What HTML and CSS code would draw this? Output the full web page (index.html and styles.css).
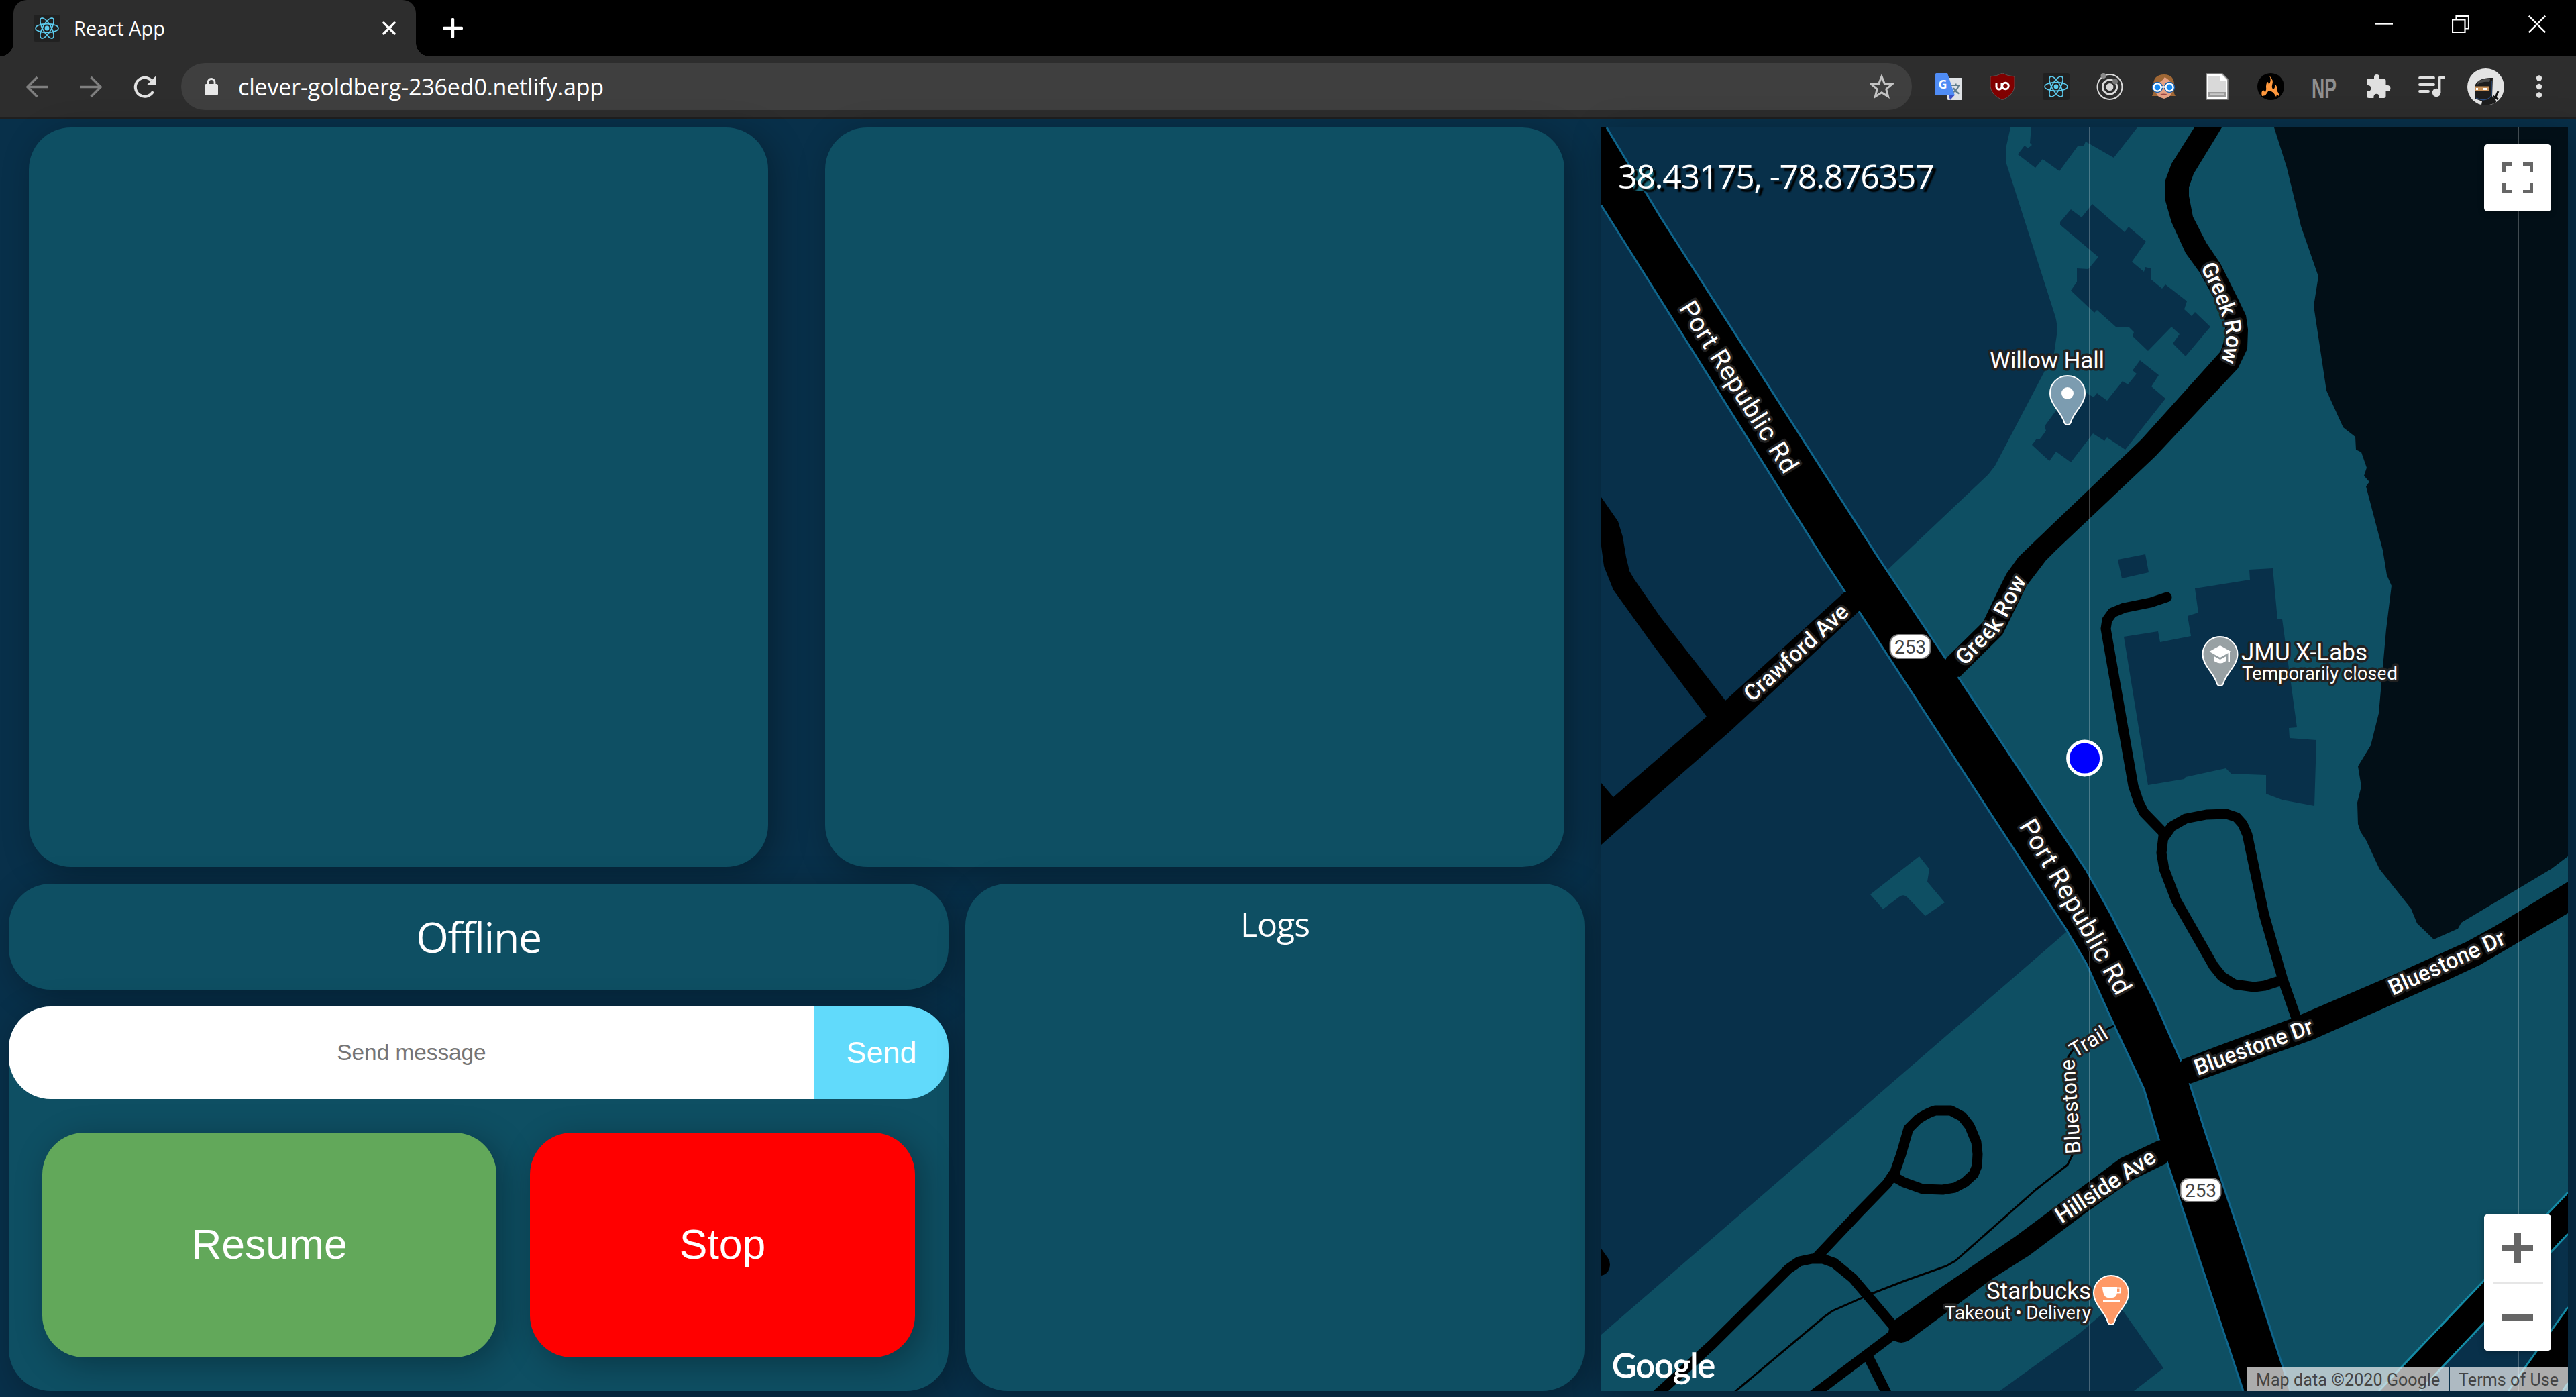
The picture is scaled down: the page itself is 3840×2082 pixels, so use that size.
FILE: index.html
```html
<!DOCTYPE html>
<html lang="en">
<head>
<meta charset="utf-8">
<title>React App</title>
<link rel="stylesheet" href="styles.css">
</head>
<body>
<svg class="defs" width="0" height="0" aria-hidden="true">
  <symbol id="react" viewBox="0 0 40 40">
    <rect width="40" height="40" rx="3" fill="#212121"/>
    <g fill="none" stroke="#5ccbee" stroke-width="1.7">
      <ellipse cx="20" cy="20" rx="17" ry="6.3"/>
      <ellipse cx="20" cy="20" rx="17" ry="6.3" transform="rotate(60 20 20)"/>
      <ellipse cx="20" cy="20" rx="17" ry="6.3" transform="rotate(120 20 20)"/>
    </g>
    <circle cx="20" cy="20" r="3.4" fill="#5ccbee"/>
  </symbol>
</svg>
<div class="browser">
  <header class="tabstrip">
    <div class="tab">
      <svg class="favicon"><use href="#react"/></svg>
      <span class="tab-title">React App</span>
      <svg class="tab-close" viewBox="0 0 20 20"><path d="M2 2L18 18M18 2L2 18" stroke="#fff" stroke-width="3.4" stroke-linecap="round"/></svg>
    </div>
    <svg class="new-tab" viewBox="0 0 30 30"><path d="M15 2V28M2 15H28" stroke="#fff" stroke-width="4.4" stroke-linecap="round"/></svg>
    <div class="window-controls">
      <svg viewBox="0 0 26 26"><path d="M0 12.5H26" stroke="#fff" stroke-width="2.4"/></svg>
      <svg viewBox="0 0 26 26"><path d="M1 6.5H19.5V25H1ZM6.5 6V1H25V19.5H20" fill="none" stroke="#fff" stroke-width="2.2"/></svg>
      <svg viewBox="0 0 26 26"><path d="M.8 .8L25.2 25.2M25.2 .8L.8 25.2" stroke="#fff" stroke-width="2.3"/></svg>
    </div>
  </header>
  <nav class="toolbar">
    <svg class="nav-icon" viewBox="0 0 36 36"><path d="M34 18H4M18 3L3 18L18 33" fill="none" stroke="#7f7f7f" stroke-width="3.6"/></svg>
    <svg class="nav-icon" viewBox="0 0 36 36"><path d="M2 18H32M18 3L33 18L18 33" fill="none" stroke="#7f7f7f" stroke-width="3.6"/></svg>
    <svg class="nav-icon" viewBox="0 0 36 36"><path d="M31 25A14.4 14.4 0 1 1 28.5 8" fill="none" stroke="#e2e2e2" stroke-width="4.2"/><path d="M35.500 1V15.500H21Z" fill="#e2e2e2"/></svg>
    <div class="omnibox">
      <svg class="lock" viewBox="0 0 22 28"><path d="M6 12V7.500a5 5 0 0 1 10 0V12" fill="none" stroke="#e8e8e8" stroke-width="2.8"/><rect x="1" y="10" width="20" height="17" rx="2.500" fill="#e8e8e8"/></svg>
      <span class="url">clever-goldberg-236ed0.netlify.app</span>
      <svg class="star" viewBox="0 0 36 36"><path d="M18 3L22.200 13.600L33.500 14.400L24.800 21.700L27.600 32.800L18 26.700L8.400 32.800L11.200 21.700L2.500 14.400L13.800 13.600Z" fill="none" stroke="#c4c4c4" stroke-width="3"/></svg>
    </div>
    <div class="extensions">
      <svg viewBox="0 0 40 40"><rect x="18" y="7" width="22" height="33" rx="1.500" fill="#dfe2e5"/><path d="M24 18H37M30.500 15.500V18M35 18Q33 25 25.500 29M27 22Q30 27.500 35.500 30.500" fill="none" stroke="#607d8b" stroke-width="2.200"/><path d="M22 40L28.500 33H20Z" fill="#3b50c4"/><path d="M1.500 0H18L29 33H1.500Q0 33 0 31.500V1.500Q0 0 1.500 0Z" fill="#4f8cf5"/><text x="4.500" y="22.500" class="g-mark">G</text></svg>
      <svg viewBox="0 0 40 40"><path d="M20 0Q28 4.500 38 5V20Q37 32 20 40Q3 32 2 20V5Q12 4.500 20 0Z" fill="#800000" stroke="#5d5454" stroke-width="1"/><path d="M11 14V20a4 4 0 0 0 8 0V14" fill="none" stroke="#fff" stroke-width="3"/><circle cx="24.500" cy="19" r="4.700" fill="none" stroke="#fff" stroke-width="3"/></svg>
      <svg viewBox="0 0 40 40"><use href="#react"/></svg>
      <svg viewBox="0 0 40 40"><g fill="none" stroke="#dcdcdc" stroke-width="2"><circle cx="20" cy="20.500" r="18.500"/><circle cx="20" cy="20.500" r="10.700" stroke-width="2.800"/></g><circle cx="20" cy="20.500" r="5.500" fill="#d6d6d6"/><circle cx="10.500" cy="4" r="4" fill="#8b8b8b"/><circle cx="28" cy="12.500" r="4" fill="#777"/></svg>
      <svg viewBox="0 0 40 40"><path d="M3 34Q7 28 5 20Q4 2 21 2Q37 2 36 20Q34 28 38 34Z" fill="#9f6735"/><path d="M7 16Q17 14 22 6Q29 10 34 17V24Q32 36 21 38Q9 36 7 24Z" fill="#e5a183"/><path d="M15 31Q20 30 26 31Q21 34 15 31Z" fill="#9c4848"/><g fill="none" stroke="#155fae" stroke-width="2"><circle cx="11" cy="21" r="7.300"/><circle cx="29" cy="21" r="7.300"/></g><g fill="#1688f0" stroke="#fff" stroke-width="2.400"><circle cx="11" cy="21" r="5.600"/><circle cx="29" cy="21" r="5.600"/><path d="M17 20.500H23"/></g></svg>
      <svg viewBox="0 0 40 40"><path d="M4 1H28L36 9V39H4Z" fill="#d9d9d9" stroke="#858585" stroke-width="1.600"/><path d="M6 3H26L34 11V37H6Z" fill="none" stroke="#fff" stroke-width="2"/><path d="M25 2V11.500H35Z" fill="#fff"/><path d="M7 28H33V36H7Z" fill="#9a9a9a"/><path d="M9 31.500H31" stroke="#c9c9c9" stroke-width="2.500"/></svg>
      <svg viewBox="0 0 40 40"><circle cx="20" cy="20" r="20" fill="#000"/><path d="M12 33L7 34Q5 27 9 25Q10 28 12 28Q14 24 13 20Q13 14 16 13Q17 16 17 17Q22 11 18 4Q25 10 22 18Q21 22 24 24Q27 22 26 16Q31 20 29 26Q32 29 33 35L29 31Q29 33 28 35L24 29L19 26L16 27Z" fill="#ff983d"/></svg>
      <svg class="np" viewBox="0 0 40 40"><text x="1" y="36.500" class="np-mark" textLength="37" lengthAdjust="spacingAndGlyphs">NP</text></svg>
      <svg viewBox="0 0 40 40"><path d="M7 8H14V6a4 4 0 0 1 8 0V8H28a3.500 3.500 0 0 1 3.500 3.500V18H34a4.500 4.500 0 0 1 0 9H31.500V34A3 3 0 0 1 28.500 37H22V35a4.300 4.300 0 0 0-8.600 0V37H6.500A3.500 3.500 0 0 1 3 33.500V27H5a4.500 4.500 0 0 0 0-9H3V11.500A3.500 3.500 0 0 1 7 8Z" fill="#e0e0e0"/></svg>
      <svg viewBox="0 0 40 40"><path d="M2 7H23M2 17H23M2 27H15" stroke="#e0e0e0" stroke-width="3.800" stroke-linecap="round"/><circle cx="27" cy="29" r="6.200" fill="#e0e0e0"/><path d="M31.500 29V7H38.500" fill="none" stroke="#e0e0e0" stroke-width="3.800" stroke-linecap="round" stroke-linejoin="round"/></svg>
    </div>
    <svg class="avatar" viewBox="0 0 55 55"><circle cx="27.500" cy="27.500" r="27.500" fill="#e3e3e3"/><path d="M12 24Q18 13 38 14L37 42Q43 45 43 50Q34 56 21 54L22 49L12 45Z" fill="#1d1d1d"/><path d="M16 19Q24 15 34 16L33 20Q22 19 15 24Z" fill="#4b4b4b"/><path d="M13 44Q29 51 36 40V18" fill="none" stroke="#2b4f84" stroke-width="1.300"/><rect x="12" y="26.500" width="21" height="7.500" fill="#c69058"/><path d="M13 30.500H16M24 30.500H30" stroke="#fff" stroke-width="3.200"/><path d="M46 34L41 45M38 41L46 46" stroke="#111" stroke-width="3"/></svg>
    <svg class="menu-dots" viewBox="0 0 10 36"><g fill="#e0e0e0"><circle cx="5" cy="5.500" r="4.200"/><circle cx="5" cy="18" r="4.200"/><circle cx="5" cy="30.500" r="4.200"/></g></svg>
  </nav>

  <main class="dashboard">
    <section class="station">
      <div class="cameras">
        <div class="panel camera"></div>
        <div class="panel camera"></div>
      </div>
      <div class="lower">
        <div class="console">
          <div class="panel status">Offline</div>
          <div class="panel controls">
            <form class="message">
              <input class="message-input" type="text" placeholder="Send message">
              <button class="message-send" type="button">Send</button>
            </form>
            <div class="actions">
              <button class="action resume" type="button">Resume</button>
              <button class="action stop" type="button">Stop</button>
            </div>
          </div>
        </div>
        <div class="panel logs">Logs</div>
      </div>
    </section>

    <section class="map">
      <svg class="map-canvas" viewBox="2387 190 1441 1883">
        <defs>
          <path id="port1" d="M2502 459L2664 715"/>
          <path id="port2" d="M3009 1231Q3080 1348 3160 1494"/>
          <path id="greek1" d="M3280 398L3299 435L3312 470Q3319 486 3319 506L3309 550"/>
          <path id="greek2" d="M2929 993L2982 938L3028 852"/>
          <path id="trail" d="M3101.500 1719L3092 1574"/>
          <path id="pin" d="M0-26A26 26 0 0 1 26 0C26 17 9 28 5 43Q4 47 0 47Q-4 47-5 43C-9 28-26 17-26 0A26 26 0 0 1 0-26Z"/>
        </defs>

        <rect x="2387" y="190" width="1441" height="1883" class="land"/>
        <path class="campus" d="M2997 190L2991 217V244L3062 466Q3068 482 3066 499L3062 526L2974 694L2964 707L2814 849L2790 860L3095 1376L3080 1389L2387 1989V2073H3828V190Z"/>
        <path class="campus" d="M2861 1276L2876 1295L2873 1314L2899 1345L2870 1365L2843 1337Q2838 1332 2832 1336L2807 1355L2788 1333Z"/>
        <path class="water" d="M3390 190L3409 250L3430 337L3456 412L3449 456L3468 582L3493 637L3511 651L3512 670L3520 674L3528 697L3524 709L3532 718L3527 725L3552 820L3558 857L3565 873L3557 938L3546 1063L3534 1111L3515 1142L3520 1172L3514 1196L3515 1228L3519 1240L3527 1252L3547 1295L3594 1354L3603 1376L3628 1400L3664 1384L3669 1375L3803 1295L3828 1276V190Z"/>

        <g class="building">
          <path d="M3028 190L3026 213L3029 216L3023 221L3018 217L3008 230L3034 250L3045 237L3070 255L3097 218H3106L3109 211L3123 219L3151 235L3186 190Z"/>
          <path d="M3071 331L3087 312L3103 324L3119 304L3167 346L3173 338L3199 360L3178 390L3196 405L3198 398L3206 400V416L3223 430L3228 424L3260 449L3256 461L3267 471L3272 465L3295 487L3258 531L3239 512L3249 498L3237 487L3202 523L3179 501L3181 495L3173 487H3154L3126 462L3122 466L3087 433L3096 420V400L3113 401L3128 383L3071 335Z"/>
          <path d="M3190 537L3218 559L3207 576L3228 594L3168 670L3141 652L3137 657L3120 646L3087 689L3065 673L3055 687L3029 663L3036 654H3041L3050 642L3048 635L3064 613L3109 585L3121 592L3126 586L3141 597L3164 568L3172 573L3185 557L3179 552Z"/>
          <path d="M3157 834L3198 826L3203 853L3163 862Z"/>
          <path d="M3166 949L3217 941L3220 957L3266 948L3261 918L3277 913L3272 877L3354 864L3353 849L3388 847L3395 923H3402L3424 1084L3412 1085L3413 1100L3453 1103L3450 1201L3402 1192L3378 1183V1155L3326 1153L3318 1145L3258 1158L3256 1161L3202 1170Z"/>
          <path d="M2981 2073L3100 1987L3155 1940L3225 2039L3181 2073Z"/>
          <path d="M3828 1839L3607 2073H3739L3828 1948Z"/>
        </g>

        <g class="road-fill">
          <path d="M3828 1777L3546 2073H3607L3828 1839Z"/>
          <path d="M3828 1948L3739 2073H3820L3828 2061Z"/>
        </g>
        <path class="edge-bright" d="M3828 1777L3546 2073M3828 1839L3607 2073M3828 1948L3739 2073M3828 2061L3820 2073"/>

        <path class="road-fill" d="M2387 190H2395L2475 323L2800 831L2902 984L2919 1009L3110 1297L3147 1363L3196 1460L3213 1494L3252 1583L3264 1614L3289 1692L3336 1831L3402 2034L3414 2073H3344L3260 1821L3229 1728L3219 1701L3196 1623L3152 1529L3110 1436L3080 1385L2771 911L2751 883L2716 830L2387 306Z"/>
        <path class="edge" d="M2395 190L2475 323L2800 831L2902 984M2919 1009L3110 1297L3147 1363L3196 1460L3213 1494L3252 1583M3264 1614L3289 1692L3336 1831L3402 2034L3414 2073M3344 2073L3260 1821L3229 1728M3219 1701L3196 1623L3152 1529L3110 1436L3080 1385L2771 911M2751 883L2716 830L2387 306"/>

        <g class="road-fill">
          <path d="M3271 190L3237 244L3227 271V296L3237 331L3258 377L3279 406L3303 449L3317 478V503L3310 524L3192 655L3036 804L3009 830L2991 855L2978 881L2956 927L2902 980L2890 1000L2921 1009L2985 946L3021 873L3050 835L3065 820L3213 680L3336 549L3350 520L3351 491L3348 470L3336 445L3310 393L3289 362L3269 323L3263 292V279L3270 259L3312 190Z"/>
          <path d="M2750 882L2572 1044L2474 918L2436 863L2429 851L2424 830L2419 800L2412 777L2387 741V814L2391 844L2405 879L2461 957L2544 1068L2405 1188L2387 1167V1259L2475 1181L2580 1089L2771 911L2790 890Z"/>
          <path d="M3253 1579L3303 1560L3416 1518L3574 1450L3676 1404L3718 1381L3828 1314V1361L3697 1438L3650 1460L3449 1549L3265 1615L3240 1600Z"/>
          <path d="M3219 1699L3161 1726L3110 1764L3004 1843L2887 1923L2825 1967Q2812 1980 2816 1992Q2830 2006 2845 1998L2971 1905L3025 1871L3110 1807L3180 1758L3229 1734L3240 1715Z"/>
          <path d="M2387 1861L2397 1875Q2403 1885 2397 1895Q2393 1900 2387 1901Z"/>
        </g>
        <g class="lane">
          <path d="M2706 1876L2773 1805L2813 1764L2825 1746L2834 1720L2845 1682L2859 1668Q2874 1658 2885 1655H2908L2925 1664L2936 1678L2946 1702L2948 1720L2947 1738L2942 1750L2929 1762L2914 1770L2896 1773L2866 1772L2838 1762L2822 1753"/>
          <path d="M2467 2081L2552 2004L2666 1891L2682 1880L2701 1876H2717L2734 1882L2762 1905L2824 1978"/>
          <path d="M2825 1987L2700 2081M2783 2018L2814 2080"/>
        </g>
        <path class="lane lane-cap" d="M3230 890L3206 898L3166 906L3149 913L3141 924L3139 937L3180 1171L3188 1195L3196 1211L3227 1243"/>
        <path class="lane" d="M3223 1252L3237 1232L3258 1220L3289 1214L3319 1213L3334 1218L3343 1228L3350 1244L3375 1363L3403 1460L3424 1520M3225 1246L3222 1271L3226 1295L3244 1342L3300 1440L3312 1455L3331 1467L3360 1471L3376 1469L3404 1460"/>
        <path class="trail" d="M2584 2076L2720 1962L2731 1954L2790 1928L2839 1909L2901 1887L2915 1879L3036 1772L3082 1736L3089 1722L3083 1575L3097 1555L3151 1529"/>

        <path class="tile-line" d="M2474.500 190V2073M3114.500 190V2073M3754.500 190V2073"/>
        <rect x="2434" y="252" width="33" height="32" fill="#1a6a7c"/>

        <g class="road-label">
          <text font-size="38.500"><textPath href="#port1" textLength="295">Port Republic Rd</textPath></text>
          <text font-size="38.500"><textPath href="#port2" textLength="294">Port Republic Rd</textPath></text>
          <text class="strong"><textPath href="#greek1" textLength="150">Greek Row</textPath></text>
          <text class="strong"><textPath href="#greek2" textLength="159">Greek Row</textPath></text>
          <text class="strong" transform="translate(2612 1047) rotate(-42.200)" textLength="197">Crawford Ave</text>
          <text class="strong" transform="translate(3276 1603) rotate(-20.200)" textLength="186">Bluestone Dr</text>
          <text class="strong" transform="translate(3567 1484) rotate(-24.600)" textLength="187">Bluestone Dr</text>
          <text class="strong" transform="translate(3073 1824) rotate(-33.300)" textLength="171">Hillside Ave</text>
          <text font-size="31"><textPath href="#trail" textLength="141">Bluestone</textPath></text>
          <text font-size="31" transform="translate(3093 1577) rotate(-31)" textLength="60">Trail</text>
        </g>

        <g class="place-label">
          <text x="2966" y="549" textLength="171">Willow Hall</text>
          <text x="3341" y="984" textLength="188">JMU X-Labs</text>
          <text x="3342" y="1013" class="small" textLength="232">Temporarily closed</text>
          <text x="2961" y="1936" textLength="156">Starbucks</text>
          <text x="2899" y="1966" class="small" textLength="218">Takeout • Delivery</text>
        </g>

        <g transform="translate(3082 586)">
          <use href="#pin" class="pin" fill="#7c9cb0"/>
          <circle r="9" fill="#fff"/>
        </g>
        <g transform="translate(3309.500 975)">
          <use href="#pin" class="pin" fill="#98a1a4"/>
          <path d="M-16-4L0-13L16-4L0 5Z" fill="#fff"/>
          <path d="M-9 3L0 8L9 3V10Q0 17-9 10ZM12-3H14.500V11H12Z" fill="#fff"/>
        </g>
        <g transform="translate(3147 1927)">
          <use href="#pin" class="pin" fill="#ff9966"/>
          <path d="M-13-9H9V0Q8 7 2 7H-5Q-12 6-13-9ZM-12 10H13V14H-12Z" fill="#fff"/>
          <path d="M9-7.500H13.500V-.5H9" fill="none" stroke="#fff" stroke-width="2"/>
        </g>

        <g class="shield">
          <rect x="2817.500" y="946" width="60" height="35" rx="13"/>
          <text x="2847.500" y="973.500">253</text>
          <rect x="3250.500" y="1756" width="60" height="35" rx="13"/>
          <text x="3280.500" y="1783.500">253</text>
        </g>

        <circle cx="3107.500" cy="1130" r="25" fill="#00f" stroke="#fff" stroke-width="4.800"/>
        <text x="2403" y="2053" class="google" textLength="154">Google</text>
      </svg>

      <div class="coordinates">38.43175, -78.876357</div>
      <button class="map-button fullscreen" type="button" aria-label="Toggle fullscreen">
        <svg viewBox="0 0 46 46"><path d="M2.500 15V2.500H15M31 2.500H43.500V15M43.500 31V43.500H31M15 43.500H2.500V31" fill="none" stroke="#666" stroke-width="5"/></svg>
      </button>
      <div class="zoom">
        <button class="map-button" type="button" aria-label="Zoom in"><svg viewBox="0 0 46 46"><path d="M23 0V46M0 23H46" stroke="#666" stroke-width="10"/></svg></button>
        <span class="zoom-line"></span>
        <button class="map-button" type="button" aria-label="Zoom out"><svg viewBox="0 0 46 46"><path d="M0 23H46" stroke="#666" stroke-width="10"/></svg></button>
      </div>
      <div class="attribution"><span class="credit">Map data ©2020 Google</span><span class="terms">Terms of Use</span></div>
    </section>
  </main>
</div>
</body>
</html>
```

FILE: styles.css
```css
* { box-sizing: border-box; }
body { margin: 0; background: #08304a; font-family: "Open Sans", "Noto Sans", sans-serif; color: #fff; }
button, input { border: 0; margin: 0; padding: 0; font-family: "Liberation Sans", Arial, sans-serif; }
svg { display: block; flex: none; }
.defs { position: absolute; }
.browser { display: flex; flex-direction: column; width: 3840px; height: 2082px; overflow: hidden; }

/* Tab strip */
.tabstrip { display: flex; height: 84px; flex: none; background: #000; }
.tab { position: relative; display: flex; align-items: center; width: 600px; margin-left: 20px; padding: 0 30px; background: #2d2d2d; border-radius: 20px 20px 0 0; }
.tab::before, .tab::after { content: ""; position: absolute; bottom: 0; width: 20px; height: 20px; }
.tab::before { left: -20px; background: radial-gradient(circle at 0 0, transparent 19.500px, #2d2d2d 20px); }
.tab::after { right: -20px; background: radial-gradient(circle at 100% 0, transparent 19.500px, #2d2d2d 20px); }
.favicon { width: 40px; height: 40px; }
.tab-title { flex: 1; margin-left: 20px; padding-bottom: 2px; font-size: 29px; letter-spacing: 0; }
.tab-close { width: 20px; height: 20px; }
.new-tab { width: 30px; height: 30px; margin: 27px 0 0 40px; }
.window-controls { display: flex; gap: 88px; margin: 23px 45px 0 auto; }
.window-controls svg { width: 26px; height: 26px; }

/* Toolbar */
.toolbar { display: flex; align-items: center; height: 93px; flex: none; padding: 0 50px 0 38px; background: #2d2d2d; border-bottom: 3px solid #1f1f1f; }
.nav-icon { width: 35px; height: 35px; margin-right: 45px; }
.omnibox { display: flex; align-items: center; width: 2580px; height: 70px; margin-left: -8px; padding: 0 27px 0 34px; border-radius: 35px; background: #3f3f3f; }
.lock { width: 22px; height: 28px; }
.url { flex: 1; margin-left: 29px; font-size: 34px; letter-spacing: -.15px; }
.star { width: 36px; height: 36px; }
.extensions { display: flex; gap: 40px; margin-left: 35px; }
.extensions svg { width: 40px; height: 40px; }
.extensions .np { overflow: visible; }
.g-mark { font: 700 18px "Open Sans", sans-serif; fill: #fff; }
.np-mark { font: 700 43px "Liberation Sans", Arial, sans-serif; fill: #8f8f8f; }
.avatar { width: 55px; height: 55px; margin-left: 33px; }
.menu-dots { width: 10px; height: 36px; margin-left: auto; }

/* Dashboard */
.dashboard { display: flex; gap: 25px; flex: 1; min-height: 0; padding: 13px 12px 9px 13px; }
.station { display: flex; flex-direction: column; gap: 25px; width: 2349px; }
.panel { background: #0e4f63; border-radius: 62.500px; box-shadow: 10px 10px 50px rgba(0, 0, 0, .3); }
.cameras { display: flex; justify-content: space-between; height: 1102px; padding: 0 30px; }
.camera { width: 1102px; }
.lower { display: flex; gap: 25px; flex: 1; }
.console { display: flex; flex-direction: column; gap: 25px; width: 1401px; }
.status { display: flex; align-items: center; justify-content: center; height: 158px; padding-bottom: 1px; font-size: 62.500px; letter-spacing: -1.300px; }
.controls { display: flex; flex-direction: column; flex: 1; }
.message { display: flex; height: 138px; margin: 0; border-radius: 62.500px; overflow: hidden; }
.message-input { flex: 1; min-width: 0; background: #fff; text-align: center; font-size: 33.333px; outline: 0; }
.message-input::placeholder { color: #757575; }
.message-send { width: 200px; background: #61dafb; color: #fff; font-size: 45px; }
.actions { display: flex; gap: 50px; flex: 1; padding: 50px; }
.action { border-radius: 62.500px; color: #fff; font-size: 62.500px; box-shadow: 10px 10px 50px rgba(0, 0, 0, .3); }
.resume { width: 677px; padding-bottom: 3px; background: #62a85a; }
.stop { flex: 1; padding-bottom: 3px; background: #f00; }
.logs { flex: 1; padding-top: 26px; text-align: center; font-size: 50px; line-height: 68px; letter-spacing: -1px; }

/* Map */
.map { position: relative; flex: 1; overflow: hidden; font-family: Roboto, sans-serif; box-shadow: 10px 10px 50px rgba(0, 0, 0, .3); }
.map-canvas { width: 100%; height: 100%; }
.land, .building { fill: #08304a; }
.campus { fill: #0e4f63; }
.water { fill: #020f17; }
.road-fill { fill: #000; }
.edge { fill: none; stroke: #0f658c; stroke-width: 3; }
.edge-bright { fill: none; stroke: #148aa5; stroke-width: 3; }
.lane { fill: none; stroke: #000; stroke-width: 15; stroke-linejoin: round; }
.lane-cap { stroke-linecap: round; }
.trail { fill: none; stroke: #000; stroke-width: 3; }
.tile-line { fill: none; stroke: #fff; stroke-opacity: .25; stroke-width: 1; }
.map-canvas text { font-family: Roboto, sans-serif; }
.road-label text, .place-label text { fill: #fff; stroke: #222; stroke-width: 7px; stroke-linejoin: round; paint-order: stroke; }
.road-label .strong { font-size: 33px; font-weight: 500; }
.place-label text { font-size: 35px; }
.place-label .small { font-size: 28px; }
.pin { stroke: #fff; stroke-width: 2; }
.shield rect { fill: #fff; stroke: #777; stroke-width: 2; }
.shield text { fill: #444; font-size: 28px; text-anchor: middle; }
.map-canvas .google { font: 400 50px Lato, sans-serif; fill: #fff; stroke: #fff; stroke-width: 1.300px; }
.coordinates { position: absolute; left: 25px; top: 38px; font: 50px/68px "Open Sans", sans-serif; letter-spacing: -1.350px; white-space: nowrap; text-shadow: 5px 5px 2px #000; }
.map-button { display: flex; align-items: center; justify-content: center; width: 100px; height: 100px; border-radius: 5px; background: #fff; }
.map-button svg { width: 46px; height: 46px; }
.fullscreen { position: absolute; right: 25px; top: 25px; box-shadow: 0 2px 10px rgba(0, 0, 0, .3); }
.zoom { position: absolute; right: 25px; bottom: 60px; display: flex; flex-direction: column; align-items: center; width: 100px; border-radius: 5px; background: #fff; box-shadow: 0 2px 10px rgba(0, 0, 0, .3); }
.zoom-line { width: 75px; height: 3px; background: #e6e6e6; }
.attribution { position: absolute; right: 0; bottom: 0; display: flex; gap: 2px; height: 35px; font-size: 25px; line-height: 38px; color: #444; white-space: nowrap; }
.attribution span { padding-left: 13px; background: rgba(245, 245, 245, .7); }
.credit { width: 300px; letter-spacing: .1px; }
.terms { width: 176px; letter-spacing: .1px; }
```
